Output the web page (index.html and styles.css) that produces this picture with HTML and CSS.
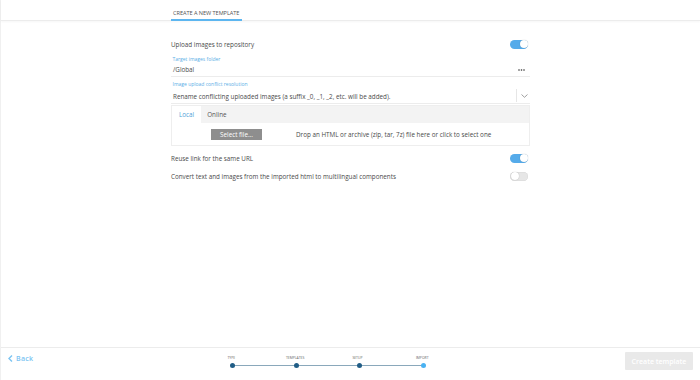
FILE: index.html
```html
<!DOCTYPE html>
<html>
<head>
<meta charset="utf-8">
<link rel="stylesheet" href="styles.css">
</head>
<body>
<div class="app">
  <header class="topbar">
    <div class="tab-active">CREATE A NEW TEMPLATE</div>
  </header>
  <main class="main">
    <div class="form">
      <div class="row toggle-row first">
        <span>Upload images to repository</span>
        <span class="toggle on"><span class="knob"></span></span>
      </div>
      <div class="field">
        <div class="label">Target images folder</div>
        <div class="input">
          <span>/Global</span>
          <svg class="dots" width="7" height="2" viewBox="0 0 7 2"><circle cx="1" cy="1" r="0.8" fill="#333"/><circle cx="3.5" cy="1" r="0.8" fill="#333"/><circle cx="6" cy="1" r="0.8" fill="#333"/></svg>
        </div>
      </div>
      <div class="field">
        <div class="label">Image upload conflict resolution</div>
        <div class="input select">
          <span class="sel-text">Rename conflicting uploaded images (a suffix _0, _1, _2, etc. will be added).</span>
          <span class="chev">
            <svg width="7" height="4" viewBox="0 0 7 4"><path d="M0.5 0.5 L3.5 3.3 L6.5 0.5" fill="none" stroke="#888" stroke-width="0.8"/></svg>
          </span>
        </div>
      </div>
      <div class="upload">
        <div class="tabs">
          <span class="utab active">Local</span>
          <span class="utab">Online</span>
        </div>
        <div class="drop">
          <span class="btn-file">Select file...</span>
          <span class="drop-text">Drop an HTML or archive (zip, tar, 7z) file here or click to select one</span>
        </div>
      </div>
      <div class="row toggle-row after-upload">
        <span>Reuse link for the same URL</span>
        <span class="toggle on"><span class="knob"></span></span>
      </div>
      <div class="row toggle-row">
        <span>Convert text and images from the imported html to multilingual components</span>
        <span class="toggle"><span class="knob"></span></span>
      </div>
    </div>
  </main>
  <footer class="footer">
    <div class="back">
      <svg width="5" height="7" viewBox="0 0 5 7"><path d="M4 0.5 L1 3.5 L4 6.5" fill="none" stroke="#7cc4f2" stroke-width="1.4"/></svg>
      <span>Back</span>
    </div>
    <div class="steps">
      <div class="step"><span class="slabel">TYPE</span><span class="dot"></span></div>
      <div class="step"><span class="slabel">TEMPLATES</span><span class="dot"></span></div>
      <div class="step"><span class="slabel">SETUP</span><span class="dot"></span></div>
      <div class="step"><span class="slabel">IMPORT</span><span class="dot current"></span></div>
    </div>
    <div class="create">Create template</div>
  </footer>
</div>
</body>
</html>
```
FILE: styles.css
```css
* { box-sizing: border-box; }
html, body { margin: 0; padding: 0; }
body {
  width: 700px;
  height: 380px;
  font-family: "Open Sans", "Noto Sans", sans-serif;
  color: #4a4a4a;
  background: #fff;
  overflow: hidden;
}
.app {
  height: 380px;
  display: flex;
  flex-direction: column;
  border-left: 1px solid #f0f0f0;
}
.topbar {
  height: 21px;
  border-bottom: 1px solid #ececec;
  box-shadow: 0 1px 2px rgba(0,0,0,0.04);
  padding-left: 170px;
  display: flex;
  align-items: stretch;
}
.tab-active {
  font-size: 5.6px;
  color: #555;
  padding: 9px 3px 0 2px;
  border-bottom: 2px solid #5db6f0;
  margin-bottom: -1px;
  letter-spacing: -0.05px;
}
.main {
  flex: 1;
  padding-left: 170px;
}
.form {
  width: 359px;
  display: flex;
  flex-direction: column;
}
.row {
  display: flex;
  justify-content: space-between;
  align-items: center;
  font-size: 6.3px;
  color: #4a4a4a;
}
.toggle-row { height: 18px; }
.toggle-row.first { margin-top: 14px; }
.toggle-row.after-upload { margin-top: 3px; }
.toggle {
  width: 18px;
  height: 9px;
  border-radius: 5px;
  background: #e6e6e6;
  position: relative;
  margin-right: 2px;
  box-shadow: inset 0 0 0 0.5px #d8d8d8;
}
.toggle.on { background: #55abea; box-shadow: none; }
.knob {
  position: absolute;
  top: 0.5px;
  left: 0.5px;
  width: 8px;
  height: 8px;
  border-radius: 50%;
  background: #fff;
  box-shadow: 0 0 1px rgba(0,0,0,0.3);
}
.toggle.on .knob { left: 9.5px; }
.field { display: flex; flex-direction: column; }
.label {
  font-size: 5px;
  color: #5aaee6;
  margin-top: 3px;
  padding-left: 1.5px;
  height: 7px;
  line-height: 7px;
}
.field + .field .label { margin-top: 4px; }
.input {
  display: flex;
  justify-content: space-between;
  align-items: center;
  height: 14px;
  font-size: 6.3px;
  color: #4a4a4a;
  padding-left: 2px;
  border-bottom: 1px solid #ececec;
}
.dots { margin-right: 5px; }
.select { height: 16px; }
.sel-text { padding-top: 2px; }
.chev {
  height: 13px;
  width: 12px;
  border-left: 1px solid #e6e6e6;
  display: flex;
  align-items: center;
  justify-content: flex-end;
  margin-right: 2px;
}
.upload {
  margin-top: 1px;
  border: 1px solid #eeeeee;
  display: flex;
  flex-direction: column;
}
.tabs {
  background: #f3f3f3;
  height: 17px;
  display: flex;
  align-items: stretch;
  font-size: 6.3px;
  color: #555;
}
.utab {
  display: flex;
  align-items: center;
  padding: 0 6px;
}
.utab.active { background: #fff; color: #4f9fd8; padding: 0 7px 0 7px; }
.drop {
  height: 22px;
  display: flex;
  align-items: center;
  font-size: 6.3px;
  color: #4a4a4a;
}
.btn-file {
  margin-left: 39px;
  width: 51px;
  height: 11px;
  background: #8e8e8e;
  color: #fff;
  font-size: 6.3px;
  display: flex;
  align-items: center;
  justify-content: center;
}
.drop-text { margin-left: 34px; }
.footer {
  height: 33px;
  border-top: 1px solid #ececec;
  display: flex;
  align-items: flex-start;
  position: relative;
}
.back {
  display: flex;
  align-items: center;
  gap: 3px;
  margin: 6px 0 0 7px;
  font-size: 7px;
  color: #7cc4f2;
  font-weight: 600;
  letter-spacing: 0.3px;
}
.steps {
  display: flex;
  margin-left: 195px;
  margin-top: 7px;
  position: relative;
}
.steps::before {
  content: "";
  position: absolute;
  left: 4px;
  right: 4px;
  top: 10px;
  height: 1px;
  background: #8aa8bb;
}
.step {
  width: 63.5px;
  display: flex;
  flex-direction: column;
  align-items: flex-start;
  position: relative;
}
.step:last-child { width: 10px; }
.slabel {
  font-size: 3.4px;
  color: #666;
  height: 7px;
  white-space: nowrap;
  text-transform: uppercase;
}
.step:nth-child(1) .slabel { margin-left: -1px; }
.step:nth-child(2) .slabel { margin-left: -6px; }
.step:nth-child(3) .slabel { margin-left: -3px; }
.step:nth-child(4) .slabel { margin-left: -3px; }
.dot {
  width: 5px;
  height: 5px;
  border-radius: 50%;
  background: #205d86;
  position: relative;
  z-index: 1;
  margin-left: 2px;
  margin-top: 1px;
}
.dot.current { background: #4ab2f2; }
.create {
  margin-left: auto;
  margin-top: 4px;
  margin-right: 7px;
  width: 68px;
  height: 18px;
  background: #e9e9e9;
  color: #fff;
  font-size: 7px;
  font-weight: 600;
  display: flex;
  align-items: center;
  justify-content: center;
  border-radius: 1px;
}
```
